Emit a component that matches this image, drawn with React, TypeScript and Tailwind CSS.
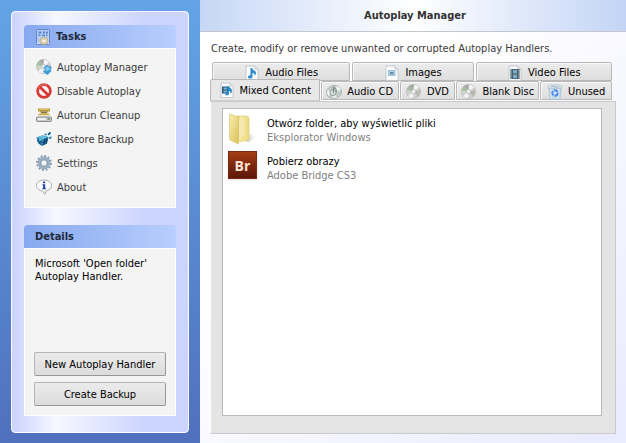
import React, { useState } from 'react';

type IconProps = { className?: string };

const TasksIcon: React.FC<IconProps> = ({ className = 'w-4 h-4' }) => (
  <svg viewBox="0 0 16 16" className={className} aria-hidden="true">
    <rect x="1.500" y=".5" width="13" height="15" rx="1" fill="#b4cdf6" stroke="#6186cc" />
    <path d="M3.500 2.500h3v2h-3zM8 2.500h2v2H8zM11 2.500h2v2h-2zM3.500 5.500h2v1.500h-2zM7 5.500h3v1.500H7zM11 5.500h1.500v1.500H11z" fill="#5b80cf" />
    <path d="M2 8.500h12v6.500H2z" fill="#cfdcf1" />
    <path d="M5 11.500a4 3.500 0 0 1 8 0v1.500a4 2.500 0 0 1-8 0z" fill="#d9d1b4" stroke="#a09d8a" strokeWidth=".7" />
    <ellipse cx="9" cy="12" rx="1.300" ry="1" fill="#fff" />
    <path d="M2.500 10h2M2.500 12h1.500" stroke="#8aa6d8" />
  </svg>
);

const Disc: React.FC = () => (
  <>
    <circle cx="7.500" cy="7.500" r="7" fill="#d0d2d1" stroke="#b2b5b4" strokeWidth=".7" />
    <path d="M7.500 7.500 3 2A7 7 0 0 0 .8 6z" fill="#a3bf98" />
    <path d="M7.500 7.500 3 2A7 7 0 0 1 8 .7z" fill="#a5aaa6" />
    <path d="M7.500 7.500 8 .7A7 7 0 0 1 13 3.500z" fill="#f6f6f4" />
    <path d="M7.500 7.500 2 12A7 7 0 0 0 7 14.300z" fill="#f1f2f1" />
    <path d="M7.500 7.500 14 6A7 7 0 0 1 12 12.800z" fill="#b9b8b1" />
    <circle cx="7.500" cy="7.500" r="2.200" fill="#e9eaea" stroke="#a7aaaa" strokeWidth=".6" />
    <circle cx="7.500" cy="7.500" r=".9" fill="#fff" />
  </>
);

const DiscIcon: React.FC<IconProps> = ({ className = 'w-4 h-4' }) => (
  <svg viewBox="0 0 16 16" className={className} aria-hidden="true">
    <Disc />
  </svg>
);

const AutoplayIcon: React.FC<IconProps> = ({ className = 'w-4 h-4' }) => (
  <svg viewBox="0 0 16 16" className={className} aria-hidden="true">
    <Disc />
    <path d="m7.500 8 4-2 1 1.500L16 8l-1.500 3 1 1-4 4-4.500-3.500L9.500 11z" fill="#3d9bd8" />
    <path d="m9 8.500 3-1 .5 1.500 2 .2-2 2.300-2 .5z" fill="#86caf2" />
  </svg>
);

const AudioDiscIcon: React.FC<IconProps> = ({ className = 'w-4 h-4' }) => (
  <svg viewBox="0 0 16 16" className={className} aria-hidden="true">
    <ellipse cx="8" cy="8" rx="7.500" ry="6.500" transform="rotate(-15 8 8)" fill="#c3cdc9" stroke="#a0aaa7" strokeWidth=".8" />
    <path d="M7 8 1.500 6A7 6 0 0 0 2.500 12z" fill="#edf0ee" />
    <path d="M8 8 11 2a7 6 0 0 1 4 4z" fill="#f4f5f3" />
    <path d="M8 8 6 14a7 6 0 0 0 5-.6z" fill="#e7ebe8" />
    <circle cx="7" cy="8.500" r="3" fill="#dce3df" stroke="#84908c" strokeWidth=".9" />
    <path d="M7.500 9V3.500C10 4 11 6 10 8" fill="none" stroke="#7a8884" strokeWidth="1.100" />
  </svg>
);

const DisableIcon: React.FC<IconProps> = ({ className = 'w-4 h-4' }) => (
  <svg viewBox="0 0 16 16" className={className} aria-hidden="true">
    <circle cx="8" cy="8" r="6.400" fill="#fbf3f2" stroke="#d43a32" strokeWidth="2.700" />
    <path d="m3.700 3.700 8.600 8.600" stroke="#d43a32" strokeWidth="2.700" />
    <path d="M2.200 5.500A6.300 6.300 0 0 1 11 2.200" fill="none" stroke="#ee857d" strokeWidth=".8" />
  </svg>
);

const CleanupIcon: React.FC<IconProps> = ({ className = 'w-4 h-4' }) => (
  <svg viewBox="0 0 16 16" className={className} aria-hidden="true">
    <path d="M2 1.500h12v3H2z" fill="#b8963a" />
    <path d="M3 2h10v1H3z" fill="#dcc063" />
    <path d="M4 4.500h8l-1.500 2h-5z" fill="#8c7434" />
    <path d="M3 6.500h10l1 2H2z" fill="#cfae4c" />
    <path d="M2.500 8.500h11l2 2H.5z" fill="#f2f2ef" />
    <rect x=".5" y="10" width="15" height="4.500" rx=".8" fill="#c9cbca" stroke="#8b8e8d" />
    <path d="M2 12h8" stroke="#fff" strokeWidth="1.500" />
    <path d="M11.500 12H14" stroke="#7c8a72" strokeWidth="1.500" />
  </svg>
);

const RestoreIcon: React.FC<IconProps> = ({ className = 'w-4 h-4' }) => (
  <svg viewBox="0 0 16 16" className={className} aria-hidden="true">
    <path d="m.5 6.500 5.500-2L12.500 6l-1.500 6.500L6 15l-4-3z" fill="#1b6da0" />
    <path d="m.5 6.500 5.500-2L12.500 6 7 8.500z" fill="#65bfe2" />
    <path d="m.5 6.500 6.500 2-1 6.500-4-3z" fill="#3fa3d2" />
    <path d="m2.500 7.200 1 5.500M4.700 7.700 5 14M1 9.300l5.500 2M8.700 7.500 8 14M7 11.200 12 9M10.500 6.800 10 13" stroke="#0f3d63" strokeWidth=".9" />
    <path d="m11.500 3.500 2.500-2.800L15 2.500l-2 2zM8.500 3l2-.7v2l-2 .5zM13 6.200l2.500-1v2L13 8.200z" fill="#2b86b8" />
    <path d="m11.500 3.500 2.500-2.800.5 1-2 2.300z" fill="#12476f" />
    <circle cx="4" cy="8.700" r="1" fill="#9fe1f4" />
  </svg>
);

const SettingsIcon: React.FC<IconProps> = ({ className = 'w-4 h-4' }) => (
  <svg viewBox="0 0 16 16" className={className} aria-hidden="true">
    <circle cx="8" cy="8" r="6.900" fill="none" stroke="#8299ae" strokeWidth="2" strokeDasharray="1.900 1.713" />
    <circle cx="8" cy="8" r="4.700" fill="none" stroke="#8ca3b8" strokeWidth="3" />
    <circle cx="8" cy="8" r="4.900" fill="none" stroke="#a9bccd" strokeWidth="1" />
    <circle cx="8" cy="8" r="3" fill="#f4f4f4" stroke="#788fa5" strokeWidth=".7" />
  </svg>
);

const AboutIcon: React.FC<IconProps> = ({ className = 'w-4 h-4' }) => (
  <svg viewBox="0 0 16 16" className={className} aria-hidden="true">
    <path d="M8 1c4.300 0 7.500 2.300 7.500 5.500 0 2.800-2.300 4.800-5.500 5.300L9 15.300 6.500 12C3 11.500.5 9.500.5 6.500.5 3.300 3.700 1 8 1z" fill="#fbfbfb" stroke="#a3a3a3" strokeWidth=".9" />
    <path d="M7 2.500h2.200v1.800H7zM6.300 5.200h2.900v4h.9v1.100H6.200V9.200h.9v-3h-.8z" fill="#2743ad" />
  </svg>
);

const Page: React.FC = () => (
  <>
    <path d="M1.500 1h9l3 3v11.500h-12z" fill="#fbfcfd" stroke="#b9bfc4" strokeWidth=".8" />
    <path d="M10.500 1v3h3" fill="#e3e8ec" stroke="#b9bfc4" strokeWidth=".8" />
  </>
);

const AudioFileIcon: React.FC<IconProps> = ({ className = 'w-4 h-4' }) => (
  <svg viewBox="0 0 15 16" className={className} aria-hidden="true">
    <Page />
    <path d="M6 3h1.700c.2 2.300 3.800 2.500 3.800 5 0 1.200-.6 2-1.300 2.800.3-1.800-.7-2.600-2.200-3V12c-.3 1.800-4.500 2.300-4.500.2C3.500 10.700 5 10 6 10.300z" fill="#2c8ccd" />
  </svg>
);

const ImageFileIcon: React.FC<IconProps> = ({ className = 'w-4 h-4' }) => (
  <svg viewBox="0 0 15 16" className={className} aria-hidden="true">
    <Page />
    <rect x="4" y="5.500" width="6.500" height="5" fill="#b4d2e6" stroke="#8fb4cd" strokeWidth=".8" />
    <path d="M5.500 7h3.500v2.300H5.500z" fill="#5f8cab" />
  </svg>
);

const VideoFileIcon: React.FC<IconProps> = ({ className = 'w-4 h-4' }) => (
  <svg viewBox="0 0 15 16" className={className} aria-hidden="true">
    <Page />
    <rect x="3" y="4" width="9" height="10" fill="#3c5261" />
    <path d="M5.500 4.700h4v3.800h-4zM5.500 9.500h4v3.800h-4z" fill="#7aabc8" />
    <path d="M4.200 4.500v9.500M10.800 4.500v9.500" stroke="#c9d8e1" strokeWidth=".9" strokeDasharray="1 1" />
  </svg>
);

const MixedIcon: React.FC<IconProps> = ({ className = 'w-4 h-4' }) => (
  <svg viewBox="0 0 15 16" className={className} aria-hidden="true">
    <Page />
    <rect x="2.500" y="4.500" width="6.500" height="7" fill="#2f5776" />
    <path d="M4 5.500h3.500v2H4zM4 8.500h3.500v2H4z" fill="#74b5dc" />
    <path d="M8 4h1.500c.2 1.800 3 2.200 3 4.700 0 1.500-.5 2.300-1.500 3.300.3-2-.3-2.800-1.500-3V12c-.3 1.600-3.700 2-3.700.2 0-1.200 1.200-1.700 2.200-1.500z" fill="#2c8ccd" />
  </svg>
);

const BinIcon: React.FC<IconProps> = ({ className = 'w-4 h-4' }) => (
  <svg viewBox="0 0 16 16" className={className} aria-hidden="true">
    <path d="m1.500 3 1.700 12.500h9.600L14.500 3z" fill="#c3d9e8" stroke="#9dbace" strokeWidth=".7" />
    <path d="m1 2 2.500-1.500L7 1.500l3-1 5 1.500-.5 2.300h-13z" fill="#dde9ef" stroke="#a3b7c3" strokeWidth=".6" />
    <path d="m4 3 3-1 1 1.500 3-1 1.500 1.200" fill="none" stroke="#8faab8" strokeWidth=".8" />
    <path d="m4 5 .8 10M12 5l-.8 10" stroke="#e6f1f7" strokeWidth=".8" />
    <circle cx="8" cy="9" r="2.800" fill="#a9c9f4" stroke="#4482e3" strokeWidth="1.700" strokeDasharray="4.600 1.260" />
    <circle cx="8" cy="9" r="1" fill="#e8f1fc" />
  </svg>
);

const FolderIcon: React.FC<IconProps> = ({ className = 'w-8 h-8' }) => (
  <svg viewBox="0 0 32 32" className={className} aria-hidden="true">
    <defs>
      <linearGradient id="flap" x1="0" x2="1" y1="0" y2="1">
        <stop offset="0" stopColor="#f8efaf" />
        <stop offset="1" stopColor="#dcc05a" />
      </linearGradient>
      <linearGradient id="back" x1="0" x2="1">
        <stop offset="0" stopColor="#d5b64e" />
        <stop offset=".3" stopColor="#f8eeb0" />
        <stop offset="1" stopColor="#ead777" />
      </linearGradient>
      <linearGradient id="shade" x1="0" x2="1">
        <stop offset="0" stopColor="#999999" stopOpacity=".65" />
        <stop offset="1" stopColor="#cccccc" stopOpacity="0" />
      </linearGradient>
    </defs>
    <path d="m17 28 5-7 6 4-7 4z" fill="url(#shade)" />
    <path d="M9 3h9.500l2.500 1.500V27L9 29z" fill="url(#back)" stroke="#e0cb7c" strokeWidth=".7" />
    <path d="m11 6 5-1v18l-5 5z" fill="#f4e9af" />
    <path d="M1.500 1 9 3.500c1 .4 1.500 1 1.500 2V31L3 27.500c-1-.5-1.500-1-1.500-2z" fill="url(#flap)" stroke="#dcc672" strokeWidth=".7" />
    <path d="m13 24 6-2v5l-6 2z" fill="#f3e28c" />
  </svg>
);

const BridgeIcon: React.FC = () => (
  <span
    aria-hidden="true"
    className="flex w-[29px] h-7 shrink-0 items-center justify-center border border-[#7a2a12] bg-linear-to-b from-[#a33d12] to-[#5c1608] font-['Open_Sans',sans-serif] text-[14px] font-bold text-[#fbe3d6] shadow"
  >
    Br
  </span>
);

const TASKS = [
  { label: 'Autoplay Manager', Icon: AutoplayIcon },
  { label: 'Disable Autoplay', Icon: DisableIcon },
  { label: 'Autorun Cleanup', Icon: CleanupIcon },
  { label: 'Restore Backup', Icon: RestoreIcon },
  { label: 'Settings', Icon: SettingsIcon },
  { label: 'About', Icon: AboutIcon },
];

const TOP_TABS = [
  { label: 'Audio Files', Icon: AudioFileIcon },
  { label: 'Images', Icon: ImageFileIcon },
  { label: 'Video Files', Icon: VideoFileIcon },
];

const BOTTOM_TABS = [
  { label: 'Mixed Content', Icon: MixedIcon },
  { label: 'Audio CD', Icon: AudioDiscIcon },
  { label: 'DVD', Icon: DiscIcon },
  { label: 'Blank Disc', Icon: DiscIcon },
  { label: 'Unused', Icon: BinIcon },
];

const HANDLERS = [
  { name: 'Otwórz folder, aby wyświetlić pliki', program: 'Eksplorator Windows', icon: <FolderIcon className="w-8 h-8" /> },
  { name: 'Pobierz obrazy', program: 'Adobe Bridge CS3', icon: <BridgeIcon /> },
];

const PANEL_TITLE =
  'flex h-[23px] shrink-0 items-center gap-[5px] rounded-t-sm bg-linear-to-r from-[#87a9ee] to-[#b8cefd] px-[11px] text-[11px] font-bold text-[#202a3c]';
const PUSH_BUTTON =
  'h-6 rounded-xs border border-[#b5b5b5] border-r-[#969696] border-b-[#969696] bg-linear-to-b from-[#ebebeb] to-[#dcdcdc] text-center';

type TabProps = {
  label: string;
  Icon: React.FC<IconProps>;
  active: boolean;
  onSelect: (label: string) => void;
};

const Tab: React.FC<TabProps> = ({ label, Icon, active, onSelect }) => (
  <button
    type="button"
    role="tab"
    aria-selected={active}
    onClick={() => onSelect(label)}
    className={
      'flex items-center justify-center gap-[5px] whitespace-nowrap rounded-t-xs border border-[#b9b9b9] ' +
      (active
        ? 'z-10 -ml-0.5 -mt-0.5 h-[22px] bg-[#e8e8e8] border-b-[#cfcfcf]'
        : 'h-[19px] bg-linear-to-b from-[#ececec] to-[#dedede] pt-0.5 shadow-[inset_1px_1px_0_#f8f8f8]')
    }
  >
    <Icon className="w-4 h-4 shrink-0" />
    {label}
  </button>
);

const App: React.FC = () => {
  const [activeTab, setActiveTab] = useState<string>('Mixed Content');

  return (
    <div className="flex min-h-screen bg-white font-['DejaVu_Sans_Condensed','DejaVu_Sans',sans-serif] text-[11px] leading-[13px] text-black">
      <aside className="flex w-[200px] shrink-0 bg-linear-to-b from-[#62a4e6] to-[#5070bd] p-[11px] pb-2.5">
        <div className="flex w-full flex-col gap-[17px] rounded-sm border border-white bg-linear-to-r from-[#cbd4fe] via-[#f6f7ff] via-25% to-[#ccd5ff] to-75% px-3 pt-[13px] pb-4">
          <section>
            <h2 className={PANEL_TITLE}>
              <TasksIcon className="w-4 h-4" />
              Tasks
            </h2>
            <nav className="flex flex-col gap-2 border border-white bg-[#f4f4f4] px-[11px] pt-2.5 pb-3 text-[#3a3a3a]">
              {TASKS.map(({ label, Icon }) => (
                <a key={label} href="#" className="flex h-4 items-center gap-[5px]">
                  <Icon className="w-4 h-4 shrink-0" />
                  {label}
                </a>
              ))}
            </nav>
          </section>

          <section className="flex grow flex-col">
            <h2 className={PANEL_TITLE}>Details</h2>
            <div className="flex grow flex-col gap-1.5 border border-white bg-[#f4f4f4] px-[9px] pt-2 pb-[9px]">
              <p className="mb-auto px-px">Microsoft 'Open folder' Autoplay Handler.</p>
              <button type="button" className={PUSH_BUTTON}>New Autoplay Handler</button>
              <button type="button" className={PUSH_BUTTON}>Create Backup</button>
            </div>
          </section>
        </div>
      </aside>

      <main className="flex min-w-0 grow flex-col">
        <header className="flex h-8 shrink-0 items-center justify-center border-b border-[#c4c8ce] bg-linear-to-r from-[#c6d7f5] via-white to-[#c3d4f5] pl-1">
          <h1 className="text-[11px] font-bold text-[#333333]">Autoplay Manager</h1>
        </header>

        <div className="flex grow flex-col bg-linear-to-br from-white from-30% to-[#e9ebff] px-2.5 pt-2.5 pb-[9px]">
          <p className="mb-[7px] whitespace-nowrap px-px text-[#3a3a3a]">
            Create, modify or remove unwanted or corrupted Autoplay Handlers.
          </p>

          <div role="tablist" className="mr-1 ml-0.5 flex flex-col">
            <div className="grid grid-cols-[139fr_122fr_137fr] gap-0.5">
              {TOP_TABS.map((tab) => (
                <Tab key={tab.label} {...tab} active={activeTab === tab.label} onSelect={setActiveTab} />
              ))}
            </div>
            <div className="grid grid-cols-[108fr_78fr_56fr_83fr_72fr] gap-px">
              {BOTTOM_TABS.map((tab) => (
                <Tab key={tab.label} {...tab} active={activeTab === tab.label} onSelect={setActiveTab} />
              ))}
            </div>
          </div>

          <div role="tabpanel" className="flex grow border border-[#c9c9ce] border-l-white bg-[#e4e4e4] pt-[6px] pr-[13px] pb-[17px] pl-[11px]">
            <ul className="flex grow flex-col gap-1.5 border border-[#b9b9b9] bg-white px-[5px] pt-1">
              {HANDLERS.map(({ name, program, icon }) => (
                <li key={name} className="flex h-8 gap-[7px]">
                  <span className="w-8 shrink-0">{icon}</span>
                  <span className="flex flex-col gap-px pt-1">
                    <span>{name}</span>
                    <span className="text-[#7f7f7f]">{program}</span>
                  </span>
                </li>
              ))}
            </ul>
          </div>
        </div>
      </main>
    </div>
  );
};

export default App;
